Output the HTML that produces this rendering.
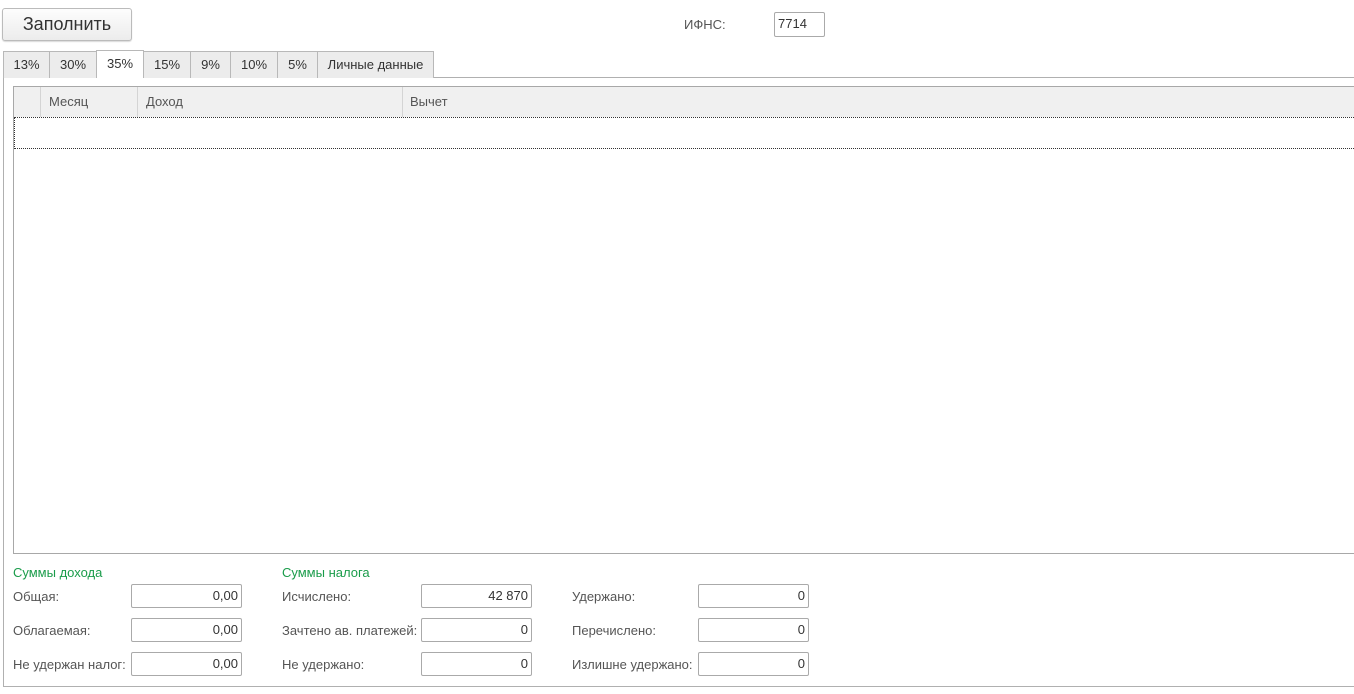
<!DOCTYPE html>
<html><head><meta charset="utf-8"><style>
*{box-sizing:border-box;margin:0;padding:0}
body{width:1354px;height:694px;background:#fff;font-family:"Liberation Sans",Arial,sans-serif;color:#444;font-size:13px;position:relative;overflow:hidden}
.a{position:absolute}
.btn{left:2px;top:8px;width:130px;height:33px;border:1px solid #bbb;border-radius:3px;background:linear-gradient(#fdfdfd,#ececec);font-size:18px;color:#333;text-align:center;line-height:31px;box-shadow:0 1px 1px rgba(0,0,0,.15)}
.tab{top:51px;height:27px;border:1px solid #b8b8b8;border-bottom:none;background:#ececec;text-align:center;line-height:25px;color:#333;font-size:13px}
.tab.act{background:#fff;top:50px;height:28px}
.inp{height:24px;border:1px solid #aaa;border-radius:2px;text-align:right;padding-right:3px;line-height:22px;color:#333;font-size:13px;background:#fff}
.lbl{color:#555;font-size:13px}
.g{color:#1a9c4a;font-size:13px}
</style></head><body>
<div class="a btn">Заполнить</div>
<div class="a lbl" style="left:684px;top:17px">ИФНС:</div>
<div class="a inp" style="left:774px;top:12px;width:51px;height:25px;text-align:left;padding-left:3px">7714</div>

<div class="a" style="left:3px;top:77px;width:1351px;height:610px;border:1px solid #b0b0b0;border-right:none"></div>
<div class="a tab" style="left:3px;width:47px">13%</div>
<div class="a tab" style="left:49px;width:48px">30%</div>
<div class="a tab" style="left:143px;width:48px">15%</div>
<div class="a tab" style="left:190px;width:41px">9%</div>
<div class="a tab" style="left:230px;width:48px">10%</div>
<div class="a tab" style="left:277px;width:41px">5%</div>
<div class="a tab" style="left:317px;width:117px">Личные данные</div>
<div class="a tab act" style="left:96px;width:48px">35%</div>

<div class="a" style="left:13px;top:86px;width:1341px;height:468px;border:1px solid #a8a8a8;border-right:none"></div>
<div class="a" style="left:14px;top:87px;width:1340px;height:30px;background:#f0f0f0"></div>
<div class="a" style="left:40px;top:87px;width:1px;height:30px;background:#d4d4d4"></div>
<div class="a" style="left:137px;top:87px;width:1px;height:30px;background:#d4d4d4"></div>
<div class="a" style="left:402px;top:87px;width:1px;height:30px;background:#d4d4d4"></div>
<div class="a lbl" style="left:49px;top:94px">Месяц</div>
<div class="a lbl" style="left:146px;top:94px">Доход</div>
<div class="a lbl" style="left:410px;top:94px">Вычет</div>
<div class="a" style="left:14px;top:117px;width:1340px;height:32px;border:1px dotted #333;border-right:none"></div>

<div class="a g" style="left:13px;top:565px">Суммы дохода</div>
<div class="a g" style="left:282px;top:565px">Суммы налога</div>
<div class="a lbl" style="left:13px;top:589px">Общая:</div>
<div class="a lbl" style="left:13px;top:623px">Облагаемая:</div>
<div class="a lbl" style="left:13px;top:657px">Не удержан налог:</div>
<div class="a inp" style="left:131px;top:584px;width:111px">0,00</div>
<div class="a inp" style="left:131px;top:618px;width:111px">0,00</div>
<div class="a inp" style="left:131px;top:652px;width:111px">0,00</div>
<div class="a lbl" style="left:282px;top:589px">Исчислено:</div>
<div class="a lbl" style="left:282px;top:623px">Зачтено ав. платежей:</div>
<div class="a lbl" style="left:282px;top:657px">Не удержано:</div>
<div class="a inp" style="left:421px;top:584px;width:111px">42 870</div>
<div class="a inp" style="left:421px;top:618px;width:111px">0</div>
<div class="a inp" style="left:421px;top:652px;width:111px">0</div>
<div class="a lbl" style="left:572px;top:589px">Удержано:</div>
<div class="a lbl" style="left:572px;top:623px">Перечислено:</div>
<div class="a lbl" style="left:572px;top:657px">Излишне удержано:</div>
<div class="a inp" style="left:698px;top:584px;width:111px">0</div>
<div class="a inp" style="left:698px;top:618px;width:111px">0</div>
<div class="a inp" style="left:698px;top:652px;width:111px">0</div>
</body></html>
